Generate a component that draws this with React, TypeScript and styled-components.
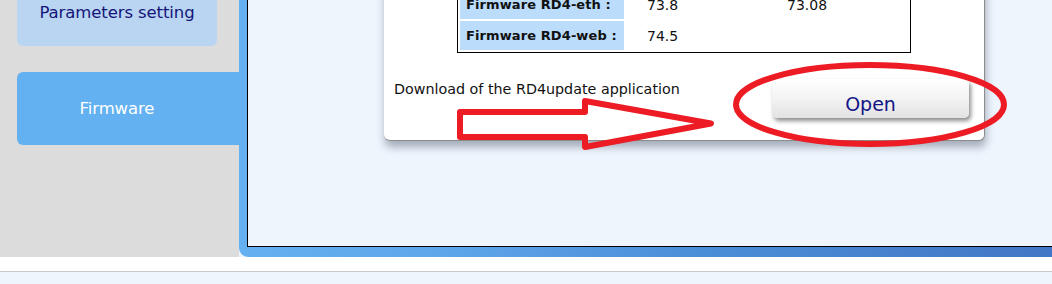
import React from "react";
import styled, { createGlobalStyle } from "styled-components";

const Global = createGlobalStyle`
  html, body { margin: 0; padding: 0; background: #eef5fd; overflow: hidden; }
  body { font-family: "DejaVu Sans", Verdana, sans-serif; }
`;

const Viewport = styled.div`
  position: relative;
  width: 1052px;
  height: 284px;
  overflow: hidden;
`;

const Page = styled.div`
  margin-top: -27px;
  display: flex;
  flex-direction: column;
`;

const Top = styled.div`
  display: flex;
  height: 284px;
`;

const Sidebar = styled.nav`
  width: 222px;
  flex: none;
  background: #dcdcdc;
  padding: 6px 0 0 17px;
  display: flex;
  flex-direction: column;
  gap: 26px;
`;

const NavItem = styled.div<{ $active?: boolean; $h?: number }>`
  height: ${(p) => p.$h ?? 73}px;
  width: 200px;
  padding-right: ${(p) => (p.$active ? "22px" : "0")};
  display: flex;
  align-items: center;
  justify-content: center;
  border-radius: ${(p) => (p.$active ? "6px 0 0 6px" : "6px")};
  background: ${(p) => (p.$active ? "#64b1f1" : "#b9d5f1")};
  color: ${(p) => (p.$active ? "#ffffff" : "#14147a")};
  font-size: 16.5px;
  letter-spacing: -0.1px;
`;

const MainOuter = styled.main`
  flex: 1;
  display: flex;
  padding: 0 0 10px 8px;
  border-bottom-left-radius: 9px;
  background: linear-gradient(to right, #64b0f0 0%, #5ea6ea 25%, #4b8fd9 55%, #4376c6 100%);
`;

const MainInner = styled.div`
  flex: 1;
  background: #eef5fd;
  border-left: 1px solid #000;
  border-bottom: 1px solid #000;
  padding-left: 136px;
`;

const Card = styled.section`
  width: 600px;
  background: #fff;
  border-right: 1px solid #8c8c8c;
  border-bottom: 1px solid #8c8c8c;
  border-radius: 0 0 6px 6px;
  box-shadow: 1px 6px 9px rgba(60, 70, 90, 0.42);
  padding: 14px 0 22px;
`;

const Table = styled.table`
  margin-left: 73px;
  width: 454px;
  table-layout: fixed;
  border: 1px solid #000;
  border-spacing: 2px;
  font-size: 14px;
  color: #111;
`;

const Label = styled.th`
  width: 164px;
  height: 29px;
  padding: 0 0 0 6px;
  box-sizing: border-box;
  background: #bbdcfb;
  text-align: left;
  font-weight: bold;
  font-size: 13px;
  white-space: nowrap;
  letter-spacing: 0.1px;
`;

const Value = styled.td<{ $w: number; $pad: number }>`
  width: ${(p) => p.$w}px;
  padding: 0 0 0 ${(p) => p.$pad}px;
  box-sizing: border-box;
  height: 29px;
`;

const BottomRow = styled.div`
  display: flex;
  justify-content: space-between;
  align-items: flex-start;
  margin-top: 25px;
  padding: 0 15px 0 10px;
`;

const Note = styled.span`
  font-size: 14.3px;
  line-height: 22px;
  color: #111;
`;

const OpenButton = styled.button`
  margin-top: 1px;
  width: 197px;
  height: 39px;
  border: none;
  border-radius: 5px;
  background: linear-gradient(to bottom, #ffffff 0%, #f3f3f3 50%, #e2e2e2 100%);
  box-shadow: 2px 3px 4px rgba(0, 0, 0, 0.45);
  font-family: "DejaVu Sans", Verdana, sans-serif;
  font-size: 19px;
  color: #141486;
  padding: 10px 0 0;
`;

const Footer = styled.div`
  height: 14px;
  background: #fff;
  border-bottom: 1px solid #c8c8c8;
`;

const Overlay = styled.svg`
  position: absolute;
  left: 0;
  top: 0;
  pointer-events: none;
`;

export default function App() {
  return (
    <Viewport>
      <Global />
      <Page>
        <Top>
          <Sidebar>
            <NavItem $h={67}>Parameters setting</NavItem>
            <NavItem $active>Firmware</NavItem>
          </Sidebar>
          <MainOuter>
            <MainInner>
              <Card>
                <Table>
                  <tbody>
                    <tr>
                      <Label>Firmware RD4-eth :</Label>
                      <Value $w={142} $pad={21}>73.8</Value>
                      <Value $w={138} $pad={17}>73.08</Value>
                    </tr>
                    <tr>
                      <Label>Firmware RD4-web :</Label>
                      <Value $w={142} $pad={21}>74.5</Value>
                      <Value $w={138} $pad={17}></Value>
                    </tr>
                  </tbody>
                </Table>
                <BottomRow>
                  <Note>Download of the RD4update application</Note>
                  <OpenButton>Open</OpenButton>
                </BottomRow>
              </Card>
            </MainInner>
          </MainOuter>
        </Top>
        <Footer />
      </Page>
      <Overlay width="1052" height="284" viewBox="0 0 1052 284">
        <polygon
          points="460,112 585,112 585,101 711,123.5 585,147 585,137 460,137"
          fill="none"
          stroke="#ed1c24"
          strokeWidth="6"
          strokeLinejoin="round"
        />
        <ellipse cx="870" cy="104.5" rx="134" ry="39.5" fill="none" stroke="#ed1c24" strokeWidth="6" />
      </Overlay>
    </Viewport>
  );
}
